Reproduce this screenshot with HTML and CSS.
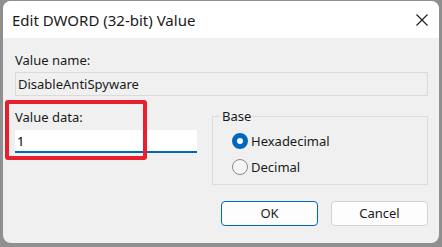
FILE: index.html
```html
<!DOCTYPE html>
<html lang="en">
<head>
    <meta charset="UTF-8">
    <title>Edit DWORD (32-bit) Value</title>
    <link rel="stylesheet" href="styles.css">
</head>
<body>
    <div class="window">
        <header class="titlebar">
            <span class="title">Edit DWORD (32-bit) Value</span>
            <svg class="close" width="12" height="12" viewBox="0 0 12 12">
                <path d="M0.5 0.5 L11.5 11.5 M11.5 0.5 L0.5 11.5" stroke="#1a1a1a" stroke-width="1.1" fill="none"/>
            </svg>
        </header>
        <main class="content">
            <div class="label">Value name:</div>
            <div class="field name-field">DisableAntiSpyware</div>
            <div class="row">
                <div class="data-col">
                    <div class="label">Value data:</div>
                    <div class="field data-field">1</div>
                </div>
                <fieldset class="base">
                    <legend>Base</legend>
                    <div class="radio checked"><span class="dot"></span>Hexadecimal</div>
                    <div class="radio"><span class="dot"></span>Decimal</div>
                </fieldset>
            </div>
            <div class="buttons">
                <div class="btn default">OK</div>
                <div class="btn">Cancel</div>
            </div>
            <div class="highlight"></div>
        </main>
    </div>
</body>
</html>
```

FILE: styles.css
```css
body {
    margin: 0;
    background: #8f8f8f;
    font-family: 'Segoe UI', 'Noto Sans', sans-serif;
    font-size: 13px;
    color: #000000;
}

.window {
    margin: 1px 3px 0 3px;
    height: 242px;
    background: #f0f0f0;
    border-radius: 8px;
    overflow: hidden;
    display: flex;
    flex-direction: column;
}

.titlebar {
    height: 37px;
    background: #ffffff;
    display: flex;
    align-items: center;
    justify-content: space-between;
    padding: 0 11px 0 9px;
    flex-shrink: 0;
}

.title {
    font-size: 15px;
    color: #1a1a1a;
}

.content {
    position: relative;
    padding: 14px 11px 0 12px;
}

.label {
    line-height: 16px;
    color: #1a1a1a;
}

.field {
    height: 24px;
    line-height: 22px;
    padding: 0 2px;
    box-sizing: border-box;
}

.name-field {
    margin-top: 4px;
    border: 1px solid #dadada;
    color: #1a1a1a;
}

.row {
    display: flex;
    gap: 15px;
    margin-top: 12px;
}

.data-col {
    width: 182px;
    padding-top: 1px;
}

.data-field {
    margin-top: 5px;
    height: 23px;
    background: #ffffff;
    border-bottom: 2px solid #0067c0;
}

.base {
    flex: 1;
    margin: 0;
    padding: 4px 0 0 8px;
    border: 1px solid #dcdcdc;
    height: 77px;
    box-sizing: border-box;
}

.base legend {
    padding: 0 1px;
    line-height: 16px;
    color: #1a1a1a;
}

.radio {
    display: flex;
    align-items: center;
    gap: 3px;
    height: 26px;
    padding-left: 11px;
    color: #1a1a1a;
}

.dot {
    width: 16px;
    height: 16px;
    border-radius: 50%;
    border: 1px solid #8a8a8a;
    box-sizing: border-box;
    background: #f6f6f6;
}

.radio.checked .dot {
    border: 5px solid #0067c0;
    background: #ffffff;
}

.buttons {
    display: flex;
    justify-content: flex-end;
    gap: 13px;
    margin-top: 16px;
}

.btn {
    width: 97px;
    height: 25px;
    line-height: 23px;
    box-sizing: border-box;
    text-align: center;
    background: #fdfdfd;
    border: 1px solid #d3d3d3;
    border-radius: 4px;
    color: #1a1a1a;
}

.btn.default {
    border-color: #0067c0;
}

.highlight {
    position: absolute;
    left: 2px;
    top: 62px;
    width: 142px;
    height: 60px;
    box-sizing: border-box;
    border: 4px solid #e8202e;
    border-radius: 3px;
}
```
